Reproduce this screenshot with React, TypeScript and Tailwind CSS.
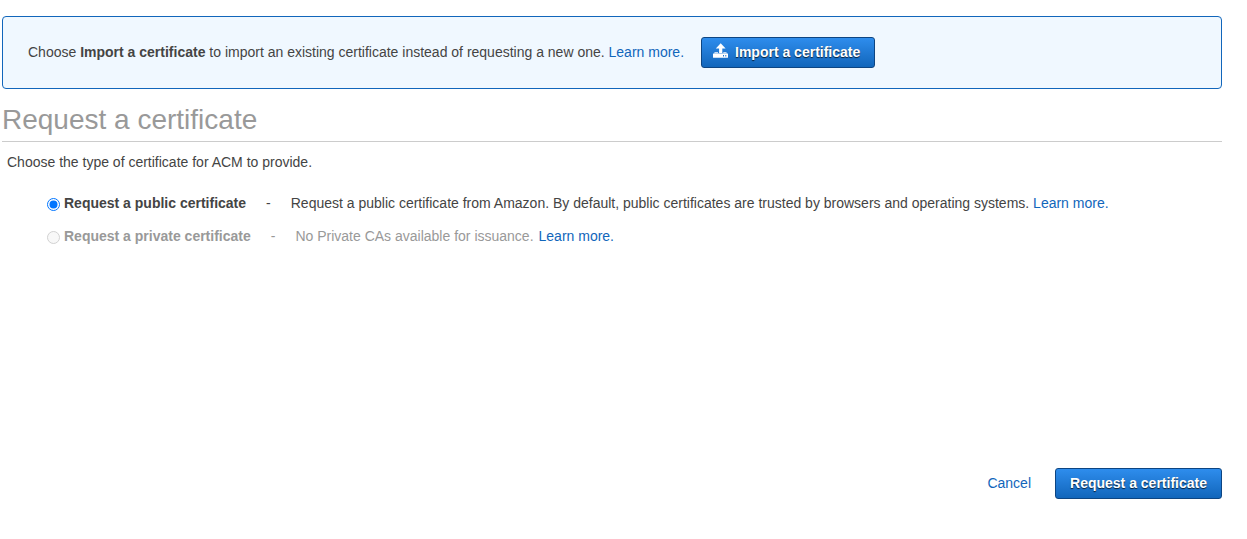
import type { ReactNode } from 'react';

function UploadIcon() {
  return (
    <svg width="15" height="15" viewBox="0 0 15 15" fill="#fff" className="mb-[3px] shrink-0">
      <path d="M7.7 0.2 L12.6 5.4 H9.3 V10 H6.1 V5.4 H2.8 Z" />
      <path fillOpacity="0.75" d="M2 9 H5 V10.2 H10.3 V9 H13 L14.6 10.6 H0.4 Z" />
      <path
        fillRule="evenodd"
        d="M0.5 10.4 H14.5 L15 11 V14.3 Q15 14.8 14.5 14.8 H0.5 Q0 14.8 0 14.3 V11 Z M10 12 V13.4 H11 V12 Z M12.3 12 V13.4 H13.3 V12 Z"
      />
    </svg>
  );
}

function Link({ children }: { children: ReactNode }) {
  return (
    <a href="#" className="text-[#1166bb]">
      {children}
    </a>
  );
}

const buttonClass =
  'flex h-[31px] shrink-0 items-center rounded-[3px] border border-[#0d4582] bg-linear-to-b from-[#2e8ded] to-[#1166bb] pb-[2px] font-bold text-white [text-shadow:0_1px_1px_rgba(0,0,0,0.75)]';

function Radio({ checked = false }: { checked?: boolean }) {
  return (
    <svg width="13" height="13" viewBox="0 0 13 13" className="mt-[5px] mr-1 shrink-0">
      <circle cx="6.5" cy="6.5" r="6" fill={checked ? '#fff' : '#f8f8f8'} stroke={checked ? '#0075ff' : '#d1d1d1'} />
      {checked && <circle cx="6.5" cy="6.5" r="4" fill="#0075ff" />}
    </svg>
  );
}

export default function App() {
  return (
    <main className="h-[539px] w-[1247px] bg-white pt-4 pr-[25px] pl-[2px] font-['Liberation_Sans',Arial,sans-serif] text-[14px] leading-5 whitespace-nowrap text-[#444]">
      <section className="flex h-[73px] items-center rounded-[4px] border border-[#1166bb] bg-[#f0f8ff] pl-[25px]">
        <p className="w-[673px] pb-[2px]">
          Choose <b>Import a certificate</b> to import an existing certificate instead of requesting a new one.{' '}
          <Link>Learn more.</Link>
        </p>
        <button className={`${buttonClass} w-[174px] gap-[7px] pl-[11px]`}>
          <UploadIcon />
          Import a certificate
        </button>
      </section>

      <h1 className="mt-3 h-[41px] border-b border-[#ccc] pt-px text-[28px] leading-9 text-[#999]">Request a certificate</h1>
      <p className="mt-[10px] pl-[5px]">Choose the type of certificate for ACM to provide.</p>

      <div className="mt-[21px] flex h-5 pl-[45px]">
        <Radio checked />
        <b>Request a public certificate</b>
        <span className="px-5">-</span>
        <span>
          Request a public certificate from Amazon. By default, public certificates are trusted by browsers and
          operating systems. <Link>Learn more.</Link>
        </span>
      </div>
      <div className="mt-[13px] flex h-5 pl-[45px] text-[#999]">
        <Radio />
        <b>Request a private certificate</b>
        <span className="px-5">-</span>
        <span className="flex gap-[5px]">
          No Private CAs available for issuance. <Link>Learn more.</Link>
        </span>
      </div>

      <footer className="mt-[222px] flex items-center justify-end gap-6">
        <span className="pb-[2px]">
          <Link>Cancel</Link>
        </span>
        <button className={`${buttonClass} w-[167px] justify-center`}>Request a certificate</button>
      </footer>
    </main>
  );
}
